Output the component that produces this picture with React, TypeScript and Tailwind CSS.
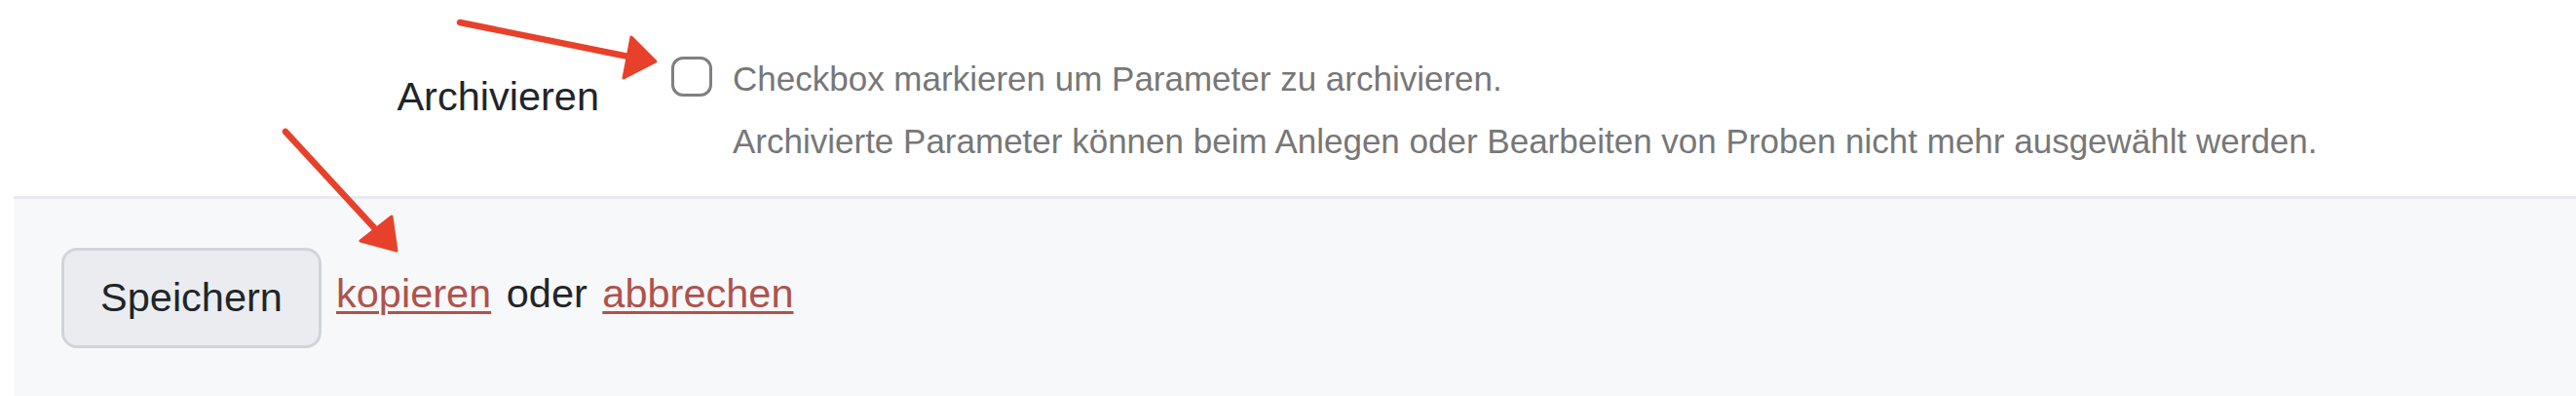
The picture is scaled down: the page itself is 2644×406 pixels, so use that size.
import React from 'react';

function Arrows() {
  return (
    <svg
      className="absolute inset-0 pointer-events-none"
      width="2644"
      height="406"
      viewBox="0 0 2644 406"
    >
      <g stroke="#e8412b" fill="#e8412b" strokeLinecap="round" strokeLinejoin="round">
        <line x1="472" y1="23" x2="650" y2="59" strokeWidth="6.5" />
        <polygon points="673,63 648,38 640,80" strokeWidth="3" />
        <line x1="293" y1="135" x2="390" y2="240" strokeWidth="6.5" />
        <polygon points="407,257 402,222 370,247" strokeWidth="3" />
      </g>
    </svg>
  );
}

export default function App() {
  return (
    <div className="relative w-[2644px] h-[406px] bg-white overflow-hidden font-['Liberation_Sans',Arial,sans-serif]">
      <div className="h-[201px] flex">
        <label className="w-[615px] text-right pt-[75px] text-[41.5px] leading-[48px] text-[#212529]">
          Archivieren
        </label>
        <div className="ml-[74px] flex items-start">
          <input
            type="checkbox"
            className="appearance-none mt-[58px] w-[42px] h-[41px] border-[3px] border-[#808080] rounded-[12px] bg-white"
          />
          <div className="ml-[21px] pt-[49px] text-[35px] leading-[64px] text-[#777777]">
            <p>Checkbox markieren um Parameter zu archivieren.</p>
            <p>Archivierte Parameter können beim Anlegen oder Bearbeiten von Proben nicht mehr ausgewählt werden.</p>
          </div>
        </div>
      </div>
      <div className="ml-[14px] h-[205px] border-t-[3px] border-[#e9eaed] bg-[#f7f8fa] flex items-center pl-[49px] text-[41.5px] text-[#212529]">
        <button className="h-[103px] w-[267px] border-[3px] border-[#d0d5da] bg-[#eaecf0] rounded-[16px] flex items-center justify-center leading-[48px]">
          Speichern
        </button>
        <span className="ml-[15px] mb-[8px] leading-[48px]">
          <a href="#" className="text-[#ae534c] underline decoration-[3px] underline-offset-[4px]">kopieren</a>
          <span className="mx-[4px]">{' '}oder{' '}</span>
          <a href="#" className="text-[#ae534c] underline decoration-[3px] underline-offset-[4px]">abbrechen</a>
        </span>
      </div>
      <Arrows />
    </div>
  );
}
